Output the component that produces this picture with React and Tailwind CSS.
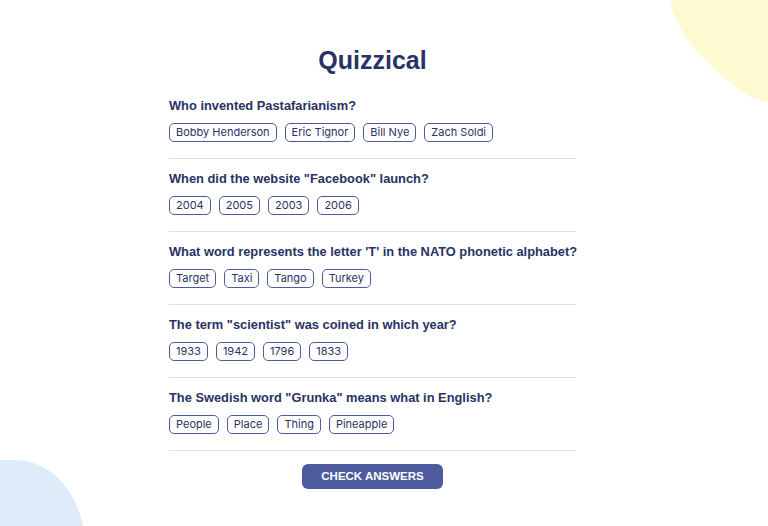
const questions = [
  {
    q: "Who invented Pastafarianism?",
    a: ["Bobby Henderson", "Eric Tignor", "Bill Nye", "Zach Soldi"],
  },
  {
    q: 'When did the website "Facebook" launch?',
    a: ["2004", "2005", "2003", "2006"],
  },
  {
    q: "What word represents the letter 'T' in the NATO phonetic alphabet?",
    a: ["Target", "Taxi", "Tango", "Turkey"],
  },
  {
    q: 'The term "scientist" was coined in which year?',
    a: ["1933", "1942", "1796", "1833"],
  },
  {
    q: 'The Swedish word "Grunka" means what in English?',
    a: ["People", "Place", "Thing", "Pineapple"],
  },
];

export default function App() {
  return (
    <div className="relative w-[768px] h-[526px] overflow-hidden bg-white">
      {/* blobs */}
      <svg className="absolute top-0 right-0" width="100" height="110" viewBox="668 0 100 110">
        <path d="M670 0 C 676 28, 692 48, 712 66 C 732 86, 750 100, 768 102 L768 0 Z" fill="#FFFAD1" />
      </svg>
      <svg className="absolute bottom-0 left-0" width="90" height="70" viewBox="0 456 90 70">
        <path d="M0 460 L14 460 C 52 460, 76 492, 83 526 L0 526 Z" fill="#DEEBF8" />
      </svg>

      <main className="relative ml-[169px] w-[407px] pt-[45px] text-[#293264]">
        <h1 className="text-center text-[25px] leading-[30px] font-bold mb-[11px] font-['Liberation_Sans',Arial,sans-serif]">
          Quizzical
        </h1>
        {questions.map((item, i) => (
          <section key={i} className="pt-[12px] pb-[16px] border-b border-[#DBDEF0]">
            <h2 className="text-[12.85px] leading-[16px] font-bold whitespace-nowrap font-['Liberation_Sans',Arial,sans-serif]">
              {item.q}
            </h2>
            <div className="flex gap-[8px] mt-[9px]">
              {item.a.map((ans) => (
                <button
                  key={ans}
                  className="h-[19px] px-[6px] border border-[#4D5B9E] rounded-[5px] text-[11px] leading-[17px] font-['Inter',sans-serif] text-[#293264] bg-white"
                >
                  {ans}
                </button>
              ))}
            </div>
          </section>
        ))}
        <div className="flex justify-center mt-[13px]">
          <button className="w-[141px] h-[25px] rounded-[6px] bg-[#4D5B9E] text-white text-[11.5px] font-bold font-['Liberation_Sans',Arial,sans-serif]">
            CHECK ANSWERS
          </button>
        </div>
      </main>
    </div>
  );
}
